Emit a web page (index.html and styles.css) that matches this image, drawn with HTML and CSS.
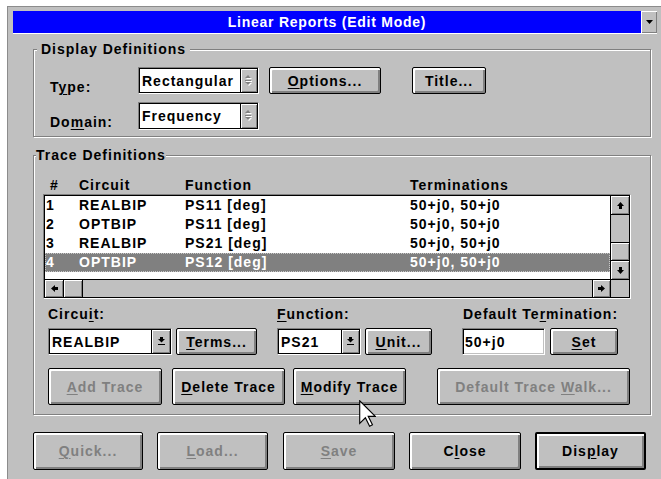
FILE: index.html
```html
<!DOCTYPE html>
<html lang="en">
<head>
<meta charset="utf-8">
<title>Linear Reports (Edit Mode)</title>
<link rel="stylesheet" href="styles.css">
</head>
<body>
<div class="window">
  <div class="titlebar">
    <div class="caption">Linear Reports (Edit Mode)</div>
    <div class="minbtn">
      <svg width="7" height="4" viewBox="0 0 7 4"><polygon points="0,0 7,0 3.5,4" fill="#000"/></svg>
    </div>
  </div>

  <div class="client">
    <div class="group group-display">
      <div class="group-title">Display Definitions</div>
      <div class="form-row">
        <span class="lbl">T<u>y</u>pe:</span>
        <div class="combo combo-type">
          <span class="field">Rectangular</span>
          <span class="spin">
            <svg width="8" height="12" viewBox="0 0 8 12">
              <g fill="#fff" transform="translate(1 1)"><polygon points="3,0 6,3 0,3"/><rect x="0" y="5" width="6" height="1"/><polygon points="0,7 6,7 3,10"/></g>
              <g fill="#808080"><polygon points="3,0 6,3 0,3"/><rect x="0" y="5" width="6" height="1"/><polygon points="0,7 6,7 3,10"/></g>
            </svg>
          </span>
        </div>
        <button class="btn btn-options"><u>O</u>ptions...</button>
        <button class="btn btn-title">Title...</button>
      </div>
      <div class="form-row form-row-2">
        <span class="lbl">Do<u>m</u>ain:</span>
        <div class="combo combo-type">
          <span class="field">Frequency</span>
          <span class="spin">
            <svg width="8" height="12" viewBox="0 0 8 12">
              <g fill="#fff" transform="translate(1 1)"><polygon points="3,0 6,3 0,3"/><rect x="0" y="5" width="6" height="1"/><polygon points="0,7 6,7 3,10"/></g>
              <g fill="#808080"><polygon points="3,0 6,3 0,3"/><rect x="0" y="5" width="6" height="1"/><polygon points="0,7 6,7 3,10"/></g>
            </svg>
          </span>
        </div>
      </div>
    </div>

    <div class="group group-trace">
      <div class="group-title">Trace Definitions</div>
      <div class="trace-head">
        <span>#</span><span>Circuit</span><span>Function</span><span>Terminations</span>
      </div>
      <div class="listbox">
        <div class="list-inner">
          <div class="rows">
            <div class="row"><span>1</span><span>REALBIP</span><span>PS11 [deg]</span><span>50+j0, 50+j0</span></div>
            <div class="row"><span>2</span><span>OPTBIP</span><span>PS11 [deg]</span><span>50+j0, 50+j0</span></div>
            <div class="row"><span>3</span><span>REALBIP</span><span>PS21 [deg]</span><span>50+j0, 50+j0</span></div>
            <div class="row selected"><span>4</span><span>OPTBIP</span><span>PS12 [deg]</span><span>50+j0, 50+j0</span></div>
          </div>
          <div class="vscroll">
            <div class="sb-btn sb-up"><svg width="7" height="7" viewBox="0 0 7 7"><polygon points="3.5,0 7,4 5,4 5,7 2,7 2,4 0,4"/></svg></div>
            <div class="sb-track"></div>
            <div class="sb-thumb sb-thumb-v"></div>
            <div class="sb-btn sb-down"><svg width="7" height="7" viewBox="0 0 7 7"><polygon points="3.5,7 7,3 5,3 5,0 2,0 2,3 0,3"/></svg></div>
          </div>
          <div class="hscroll">
            <div class="sb-btn sb-left"><svg width="7" height="7" viewBox="0 0 7 7"><polygon points="0,3.5 4,0 4,2 7,2 7,5 4,5 4,7"/></svg></div>
            <div class="sb-thumb sb-thumb-h"></div>
            <div class="sb-track"></div>
            <div class="sb-btn sb-right"><svg width="7" height="7" viewBox="0 0 7 7"><polygon points="7,3.5 3,0 3,2 0,2 0,5 3,5 3,7"/></svg></div>
          </div>
          <div class="corner"></div>
        </div>
      </div>

      <div class="edit-grid">
        <div class="edit-col">
          <div class="edit-lbl">Circu<u>i</u>t:</div>
          <div class="ctl-row">
            <div class="combo combo-circuit">
              <span class="field">REALBIP</span>
              <span class="drop"><svg width="7" height="9" viewBox="0 0 7 9"><rect x="2" y="0" width="3" height="2"/><polygon points="0,2 7,2 3.5,5.5"/><rect x="0" y="7" width="7" height="1"/></svg></span>
            </div>
            <button class="btn btn-terms"><u>T</u>erms...</button>
          </div>
        </div>
        <div class="edit-col">
          <div class="edit-lbl"><u>F</u>unction:</div>
          <div class="ctl-row">
            <div class="combo combo-func">
              <span class="field">PS21</span>
              <span class="drop"><svg width="7" height="9" viewBox="0 0 7 9"><rect x="2" y="0" width="3" height="2"/><polygon points="0,2 7,2 3.5,5.5"/><rect x="0" y="7" width="7" height="1"/></svg></span>
            </div>
            <button class="btn btn-unit"><u>U</u>nit...</button>
          </div>
        </div>
        <div class="edit-col">
          <div class="edit-lbl edit-lbl-term">Default Te<u>r</u>mination:</div>
          <div class="ctl-row">
            <div class="textbox">50+j0</div>
            <button class="btn btn-set"><u>S</u>et</button>
          </div>
        </div>
      </div>

      <div class="actions">
        <button class="btn disabled btn-add"><u>A</u>dd Trace</button>
        <button class="btn btn-delete"><u>D</u>elete Trace</button>
        <button class="btn btn-modify"><u>M</u>odify Trace</button>
        <button class="btn disabled btn-walk">Default Trace <u>W</u>alk...</button>
      </div>
    </div>

    <div class="dialog-buttons">
      <button class="btn disabled btn-quick"><u>Q</u>uick...</button>
      <button class="btn disabled btn-load"><u>L</u>oad...</button>
      <button class="btn disabled btn-save"><u>S</u>ave</button>
      <button class="btn btn-close">C<u>l</u>ose</button>
      <button class="btn default btn-display">Dis<u>p</u>lay</button>
    </div>
  </div>
</div>

<svg class="cursor" width="17" height="27" viewBox="0 0 12 19">
  <polygon points="0.5,0.5 0.5,16.5 4.5,12.5 7.5,18.5 9.5,17.5 6.5,11.5 11.5,11.5" fill="#fff" stroke="#000" stroke-width="0.8" stroke-linejoin="miter"/>
</svg>
</body>
</html>
```

FILE: styles.css
```css
html, body {
  margin: 0;
  height: 100%;
  overflow: hidden;
  background: #fff;
}

body {
  font: bold 14px/16px "Liberation Sans", Arial, sans-serif;
  letter-spacing: 1px;
  color: #000;
}

u {
  text-decoration: underline;
  text-underline-offset: 2px;
}

/* ---------- window frame ---------- */
.window {
  margin: 6px 0 0 7px;
  width: 644px;
  height: 468px;
  padding: 4px 4px 0 5px;
  border-top: 1px solid #8c8c8c;
  border-left: 1px solid #8c8c8c;
  background: #c0c0c0;
}

.titlebar {
  display: flex;
  height: 22px;
  border-bottom: 1px solid #fff;
}

.caption {
  flex: 1;
  background: #0000ff;
  color: #fff;
  text-align: center;
  line-height: 22px;
  letter-spacing: 0.75px;
}

.minbtn {
  width: 16px;
  display: flex;
  align-items: center;
  justify-content: center;
  background: #c0c0c0;
  box-shadow: inset 1px 1px 0 #fff, inset -1px -1px 0 #808080;
}

.client {
  padding-left: 20px;
}

/* ---------- etched group boxes ---------- */
.group {
  width: 618px;
  box-sizing: border-box;
  border: 1px solid #808080;
  box-shadow: inset 1px 1px 0 #fff, 1px 1px 0 #fff;
}

.group-title {
  display: table;
  margin-top: -8px;
  line-height: 14px;
  background: #c0c0c0;
}

.group-display {
  margin-top: 15px;
  padding: 0 0 6px 16px;
}

.group-display .group-title {
  margin-left: -13px;
  padding: 0 4px;
}

.group-trace {
  margin-top: 18px;
  padding: 0 0 9px 9px;
}

.group-trace .group-title {
  margin-left: -7px;
  padding: 0;
}

/* ---------- display definitions ---------- */
.form-row {
  display: flex;
  height: 27px;
  margin-top: 11px;
}

.form-row-2 {
  height: 28px;
  margin-top: 8px;
}

.lbl {
  width: 88px;
  padding-top: 12px;
}

/* ---------- sunken fields & combos ---------- */
.combo {
  display: flex;
  box-sizing: border-box;
  height: 100%;
  border: 1px solid;
  border-color: #808080 #fff #fff #808080;
}

.combo .field {
  flex: 1;
  display: flex;
  align-items: center;
  padding-left: 2px;
  background: #fff;
  border: 1px solid #000;
  border-right: 0;
}

.combo .spin,
.combo .drop {
  display: flex;
  align-items: center;
  justify-content: center;
  background: #c0c0c0;
  border: 1px solid #000;
  box-shadow: inset 1px 1px 0 #fff, inset -1px -1px 0 #808080;
}

.combo-type { width: 121px; }
.combo-type .spin { width: 16px; }

.combo-circuit { width: 124px; }
.combo-circuit .drop { width: 18px; }

.combo-func { width: 84px; }
.combo-func .drop { width: 17px; }

.textbox {
  box-sizing: border-box;
  width: 83px;
  height: 100%;
  display: flex;
  align-items: center;
  padding-left: 2px;
  background: #fff;
  border: 1px solid;
  border-color: #808080 #fff #fff #808080;
  box-shadow: inset 1px 1px 0 #000, inset -1px -1px 0 #c0c0c0;
}

/* ---------- push buttons ---------- */
.btn {
  font: inherit;
  letter-spacing: inherit;
  color: #000;
  margin: 0;
  padding: 0;
  height: 100%;
  box-sizing: border-box;
  text-align: center;
  white-space: nowrap;
  background: #c0c0c0;
  border: 1px solid #000;
  border-radius: 2px;
  box-shadow: inset 2px 2px 0 #fff, inset -2px -2px 0 #808080;
}

.btn.disabled {
  color: #808080;
}

.btn.default {
  border-width: 2px;
}

.btn-options { width: 112px; margin-left: 10px; }
.btn-title { width: 74px; margin-left: 31px; }

/* ---------- trace list ---------- */
.trace-head {
  display: grid;
  grid-template-columns: 29px 106px 225px auto;
  padding-left: 7px;
  margin-top: 15px;
}

.listbox {
  width: 588px;
  height: 105px;
  margin-top: 1px;
  box-sizing: border-box;
  border: 1px solid;
  border-color: #808080 #fff #fff #808080;
}

.list-inner {
  height: 100%;
  box-sizing: border-box;
  border: 1px solid #000;
  display: grid;
  grid-template-columns: 1fr 19px;
  grid-template-rows: 1fr 18px;
  background: #fff;
}

.rows {
  overflow: hidden;
}

.row {
  display: grid;
  grid-template-columns: 33px 106px 225px auto;
  height: 19px;
  line-height: 19px;
  padding-left: 1px;
  white-space: nowrap;
}

.row.selected {
  background: #808080;
  color: #fff;
  outline: 1px dotted #c8c8c8;
  outline-offset: -1px;
}

.vscroll {
  display: flex;
  flex-direction: column;
  border-left: 1px solid #000;
  background: #c0c0c0;
}

.hscroll {
  display: flex;
  border-top: 1px solid #000;
  background: #c0c0c0;
}

.corner {
  border-top: 1px solid #000;
  border-left: 1px solid #000;
  background: #c0c0c0;
}

.sb-btn {
  display: flex;
  align-items: center;
  justify-content: center;
  background: #c0c0c0;
  box-shadow: inset 1px 1px 0 #fff, inset -1px -1px 0 #808080;
}

.sb-btn svg { fill: #000; }

.sb-track {
  flex: 1;
  background: #c0c0c0;
}

.sb-thumb {
  background: #c0c0c0;
  box-shadow: inset 1px 1px 0 #fff, inset -1px -1px 0 #808080;
}

.sb-up { height: 18px; border-bottom: 1px solid #000; }
.sb-down { height: 18px; }
.sb-thumb-v { height: 17px; border-top: 1px solid #000; border-bottom: 1px solid #000; }

.sb-left { width: 18px; border-right: 1px solid #000; }
.sb-thumb-h { width: 18px; border-right: 1px solid #000; }
.sb-right { width: 17px; border-left: 1px solid #000; }

/* ---------- edit controls ---------- */
.edit-grid {
  display: grid;
  grid-template-columns: 229px 185px auto;
  margin-top: 7px;
  padding-left: 5px;
}

.edit-lbl-term {
  padding-left: 1px;
}

.ctl-row {
  display: flex;
  height: 27px;
  margin-top: 6px;
}

.btn-terms { width: 81px; margin-left: 4px; }
.btn-unit { width: 67px; margin-left: 4px; }
.btn-set { width: 68px; margin-left: 5px; }

.actions {
  display: flex;
  height: 37px;
  margin-top: 13px;
  padding-left: 5px;
}

.btn-add { width: 114px; }
.btn-delete { width: 113px; margin-left: 10px; }
.btn-modify { width: 113px; margin-left: 8px; }
.btn-walk { width: 193px; margin-left: 31px; }

/* ---------- dialog buttons ---------- */
.dialog-buttons {
  display: flex;
  height: 38px;
  margin-top: 17px;
}

.btn-quick { width: 110px; }
.btn-load { width: 111px; margin-left: 14px; }
.btn-save { width: 112px; margin-left: 15px; }
.btn-close { width: 112px; margin-left: 14px; }
.btn-display { width: 111px; margin-left: 14px; }

/* mouse pointer resting over the Modify Trace button */
.cursor {
  position: absolute;
  left: 359px;
  top: 400px;
}
```
